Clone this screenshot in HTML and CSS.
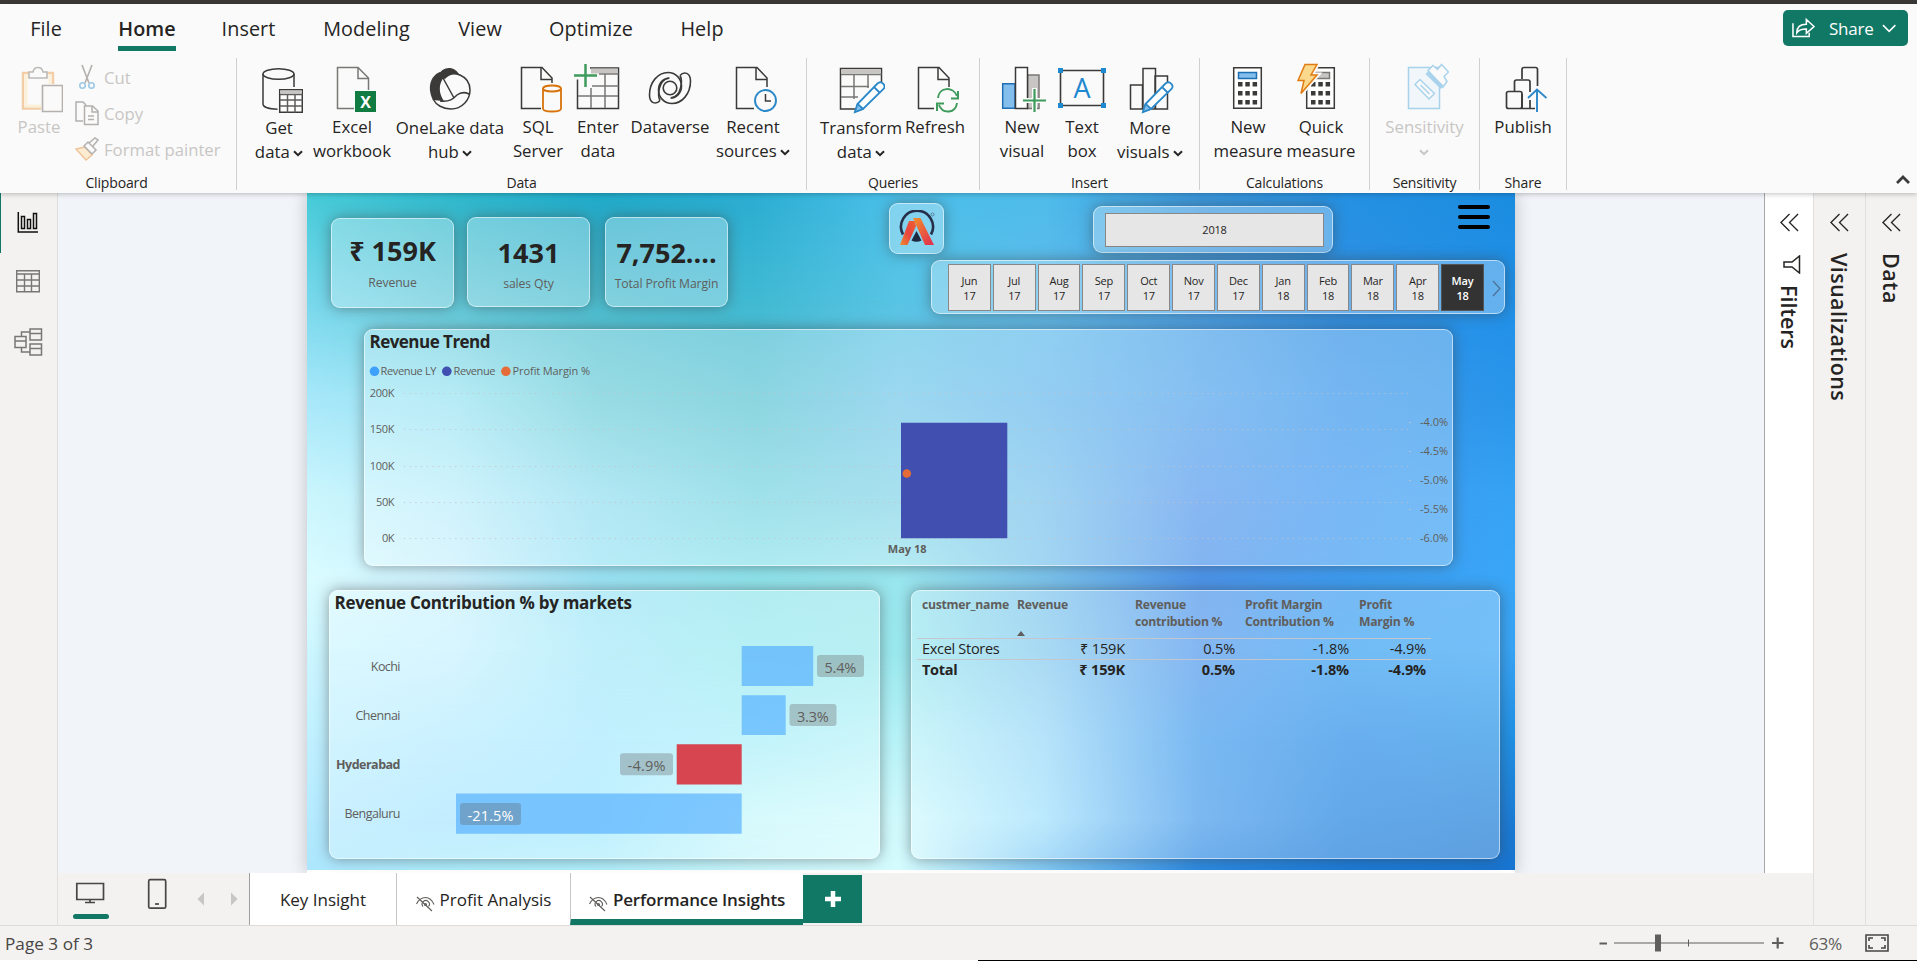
FILE: index.html
```html
<!DOCTYPE html>
<html lang="en">
<head>
<meta charset="utf-8">
<title>Power BI Desktop</title>
<link rel="stylesheet" href="styles.css">
</head>
<body>
<svg class="defs" width="0" height="0">
  <symbol id="chev" viewBox="0 0 10 7"><path d="M1 1.2l4 4 4-4" fill="none" stroke="currentColor" stroke-width="2"/></symbol>
  <symbol id="dbl" viewBox="0 0 20 20"><path d="M10 1L1 10l9 9M19 1l-9 9 9 9" fill="none" stroke="#252423" stroke-width="1.4"/></symbol>
  <symbol id="hidden" viewBox="0 0 20 17"><g fill="none" stroke="#605e5c" stroke-width="1.1"><path d="M1.500 9C4 4 7 2.500 10.500 2.500S17 5 19 9.500M2 2l15 14"/><path d="M8 11.500a3.600 3.600 0 1 1 5.500 0"/><circle cx="10.500" cy="9.500" r="1"/></g></symbol>
</svg>
<div class="app">
  <div class="titlebar"></div>
  <header class="ribbon">
    <div class="menu-row">
      <nav class="menu">
        <a>File</a><a class="on">Home</a><a>Insert</a><a>Modeling</a><a>View</a><a>Optimize</a><a>Help</a>
      </nav>
      <button class="share">
        <svg width="24" height="22" viewBox="0 0 24 22" fill="none" stroke="#fff" stroke-width="1.6"><path d="M1 6v14h17v-4M5 16c0-6 4-9 10-9V2l8 7.500-8 7V12c-5 0-8 1-10 4z"/></svg>
        <span>Share</span>
        <svg width="15" height="9" viewBox="0 0 15 9"><path d="M1 1l6.500 6.500L14 1" fill="none" stroke="#fff" stroke-width="1.600"/></svg>
      </button>
    </div>
    <div class="groups">
      <section class="group g-clip">
        <div class="clip">
          <div class="btn off"><svg class="ic" viewBox="15 62 48 52" fill="none" stroke-width="2"><path d="M41 108.500H23V73H53V84" stroke="#f2cda6" stroke-width="2.400"/><path d="M41 106H26V76H50V84" stroke="#fbf0d9" stroke-width="3"/><path d="M29 78v-6h4c1-6 9-6 10 0h4v6z" stroke="#bdbbb9" fill="#fafafa" stroke-width="1.600"/><path d="M42.500 85.500h20v26h-20z" stroke="#b3b0ad" fill="#fafafa" stroke-width="1.600"/></svg><span>Paste</span></div>
          <ul>
            <li><svg width="24" height="26" viewBox="0 0 24 26" fill="none" stroke-width="1.600"><path d="M7 1l7 18M17 1l-7 18" stroke="#b3b0ad"/><circle cx="7.500" cy="21.500" r="2.700" stroke="#9dc9e6"/><circle cx="16.500" cy="21.500" r="2.700" stroke="#9dc9e6"/></svg>Cut</li>
            <li><svg width="24" height="26" viewBox="0 0 24 26" fill="none" stroke="#b3b0ad" stroke-width="1.500"><path d="M8 21H1V2h7l3 3M9.500 6h8l5.500 5v13.500H9.500z"/><path d="M17 6v6h6M13 16h6M13 19.500h6"/></svg>Copy</li>
            <li><svg width="24" height="26" viewBox="0 0 24 26" fill="none" stroke-width="1.500"><path d="M1 13l9-2 7 8-6 5z" fill="#fcecd2" stroke="#f0c49a"/><path d="M9 10l4-4 8 8-4 4zM14 7l6-5 3 2-5 6" stroke="#b3b0ad" fill="#fafafa"/></svg>Format painter</li>
          </ul>
        </div>
        <h6>Clipboard</h6>
      </section>
      <section class="group g-data">
        <div class="btns">
          <div class="btn low"><svg class="ic" viewBox="255 62 48 52" fill="none" stroke="#3b3a39" stroke-width="1.500"><ellipse cx="278.500" cy="74" rx="15.500" ry="5.300"/><path d="M263 74v30c0 3 6 5 14.500 5.200M294 74v13"/><path d="M279.700 89.700h22.600v22.600h-22.600z" fill="#fff"/><path d="M280 90.500h22v3h-22z" fill="#c8c6c4" stroke="none"/><path d="M280 94.500h22.500M280 100h22.500M280 106h22.500M287.500 94.500v18M295 94.500v18" stroke="#605e5c"/></svg><span>Get<br>data <svg class="cv"><use href="#chev"/></svg></span></div>
          <div class="btn"><svg class="ic" viewBox="328 62 48 52" fill="none" stroke="#797775" stroke-width="1.500"><path d="M354 108.500H337.500V67.500H358L368.500 78V90"/><path d="M358 67.500V78.500H368.500"/><path d="M355 91h21v21h-21z" fill="#107c41" stroke="none"/><text x="365.500" y="107.500" class="xl">X</text></svg><span>Excel<br>workbook</span></div>
          <div class="btn low"><svg class="ic" viewBox="427 62 48 52"><path d="M439 76C443 66 456 65 461 76C458 73 450 74 446 79z" fill="#3b3a39"/><path d="M441 72C431 76 428 88 434 100L444 101C439 94 439 84 444 77z" fill="#3b3a39"/><g fill="none" stroke="#3b3a39" stroke-width="1.500"><path d="M461 75c7 3 10 8 10 15c0 10-8 19-19 19c-8 0-15-4-18-10M446 76c5-3 11-3 15-1M444 78l11 20M441 101c10 1 13-2 17-6c4-3 8-3 12-1M444 77c-5 7-5 16 0 24"/></g></svg><span>OneLake data<br>hub <svg class="cv"><use href="#chev"/></svg></span></div>
          <div class="btn"><svg class="ic" viewBox="514 62 48 52" fill="none" stroke="#3b3a39" stroke-width="1.500"><path d="M541 108.500H521.500V67.500H542L552 78V83"/><path d="M541 67.500V79.500H552"/><g stroke="#d8730b" stroke-width="1.800" fill="#fafafa"><path d="M543 88.500v20c0 4 18 4 18 0v-20"/><ellipse cx="552" cy="88.500" rx="9" ry="3"/></g></svg><span>SQL<br>Server</span></div>
          <div class="btn"><svg class="ic" viewBox="574 62 48 52" fill="none" stroke="#3b3a39" stroke-width="1.500"><path d="M577.500 79.500v29h41V68H590"/><path d="M591 68.500h27v5h-27z" fill="#c8c6c4" stroke="none"/><path d="M599 74h19.500M592 86h26.500M578 96h40M605 74v34M591 88v20" stroke="#797775"/><path d="M574 75.500h23M585.500 64v23" stroke="#3f9b5c" stroke-width="2.500"/></svg><span>Enter<br>data</span></div>
          <div class="btn"><svg class="ic" viewBox="646 62 48 52" fill="none" stroke="#3b3a39" stroke-width="1.600"><g id="dvh"><path d="M660 100.500C656 105 649.500 103.500 649.500 95C649.500 82 658 72.500 668 72.500C676 72.500 681.500 79 681.500 86C681.500 93 676.500 98 670.500 98"/><path d="M660 100.500C657.500 96 658 79.500 669 78.300"/></g><use href="#dvh" transform="rotate(180 670 88)"/><circle cx="670" cy="88" r="6.800"/></svg><span>Dataverse</span></div>
          <div class="btn"><svg class="ic" viewBox="729 62 48 52" fill="none" stroke="#3b3a39" stroke-width="1.500"><path d="M754 108.500H736.500V67.500H757L767 78V87"/><path d="M756 67.500V79.500H767"/><circle cx="765.500" cy="100.500" r="10.500" stroke="#2b88c8" stroke-width="1.900"/><path d="M765.500 94v7h5.500"/></svg><span>Recent<br>sources <svg class="cv"><use href="#chev"/></svg></span></div>
        </div>
        <h6>Data</h6>
      </section>
      <section class="group g-query">
        <div class="btns">
          <div class="btn low"><svg class="ic" viewBox="837 62 48 52" fill="none" stroke="#3b3a39" stroke-width="1.500"><path d="M858 109H840.500V68.500H881.500V82"/><path d="M841 69.500h40v4h-40z" fill="#c8c6c4" stroke="none"/><path d="M841 74.500h40.500M841 86.500h28M841 97h17M854 75v24M868 75v13" stroke="#797775"/><path id="pen" d="M855 112l2.500-8 20-20.500c4-3.500 9 2 6 5.500l-20.500 20zM857.500 104l5.500 5M874 87l6 6" stroke="#2b88c8" stroke-width="1.800" fill="#fff"/><path d="M855 112l2.500-8 5.500 5z" fill="#83beec" stroke="#2b88c8"/></svg><span>Transform<br>data <svg class="cv"><use href="#chev"/></svg></span></div>
          <div class="btn"><svg class="ic" viewBox="911 62 48 52" fill="none" stroke="#3b3a39" stroke-width="1.500"><path d="M934 108.500H918.500V67.500H939L949 78V87"/><path d="M938 67.500V79.500H949"/><path d="M938 98c1-11 15-12 19-2M957 103c-1 10-14 12-18 2M958 91v7.500H951M937 111v-7.500h7" stroke="#3f9b5c" stroke-width="2"/></svg><span>Refresh</span></div>
        </div>
        <h6>Queries</h6>
      </section>
      <section class="group g-insert">
        <div class="btns">
          <div class="btn"><svg class="ic" viewBox="998 62 48 52" fill="none" stroke="#3b3a39" stroke-width="1.500"><path d="M1002.700 83.700H1015v24.600h-12.300z" fill="#83beec" stroke="#1f6fb5"/><path d="M1027.500 75h11.500v33.500h-11.500z" fill="#c8c6c4" stroke="#797775"/><path d="M1015.500 67.500h12v41h-12z" fill="#fff"/><path d="M1022 100.500h24M1034.500 88v24" stroke="#fafafa" stroke-width="5"/><path d="M1023 100.500h23M1034.500 89v23" stroke="#3f9b5c" stroke-width="2.200"/></svg><span>New<br>visual</span></div>
          <div class="btn"><svg class="ic" viewBox="1058 62 48 52" fill="none" stroke="#3b3a39" stroke-width="1.600"><path d="M1060.500 70.500h43v35h-43z"/><path d="M1058 68h5v5h-5zM1101 68h5v5h-5zM1058 103h5v5h-5zM1101 103h5v5h-5z" fill="#1e88d0" stroke="none"/><text x="1082" y="98" class="ta">A</text></svg><span>Text<br>box</span></div>
          <div class="btn low"><svg class="ic" viewBox="1126 62 48 52" fill="none" stroke="#3b3a39" stroke-width="1.500"><path d="M1130.500 85h12v24h-12zM1155 76h12.500v33H1155zM1143 68.500h12.500v40.500H1143z" fill="#fafafa"/><use href="#pen" x="288"/><path d="M1143 112l2.500-8 5.500 5z" fill="#83beec" stroke="#2b88c8"/></svg><span>More<br>visuals <svg class="cv"><use href="#chev"/></svg></span></div>
        </div>
        <h6>Insert</h6>
      </section>
      <section class="group g-calc">
        <div class="btns">
          <div class="btn"><svg class="ic" viewBox="1224 62 48 52"><g id="calc"><path d="M1233.700 67.700h27.600v40.600h-27.600z" fill="#fff" stroke="#3b3a39" stroke-width="1.500"/><path d="M1238 82h4.500v4.500h-4.500zM1245.300 82h4.500v4.500h-4.500zM1252.600 82h4.500v4.500h-4.500zM1238 91h4.500v4.500h-4.500zM1245.300 91h4.500v4.500h-4.500zM1252.600 91h4.500v4.500h-4.500zM1238 100h4.500v4.500h-4.500zM1245.300 100h4.500v4.500h-4.500zM1252.600 100h4.500v4.500h-4.500z" fill="#3b3a39"/></g><path d="M1238.500 72.500h18v6h-18z" fill="#83beec" stroke="#1f6fb5" stroke-width="1.500"/></svg><span>New<br>measure</span></div>
          <div class="btn"><svg class="ic" viewBox="1297 62 48 52"><use href="#calc" x="73"/><path d="M1311.500 72.500h18v6h-18z" fill="#c8c6c4" stroke="#797775" stroke-width="1.500"/><path d="M1305 64.500h12l-6 10.500h6l-16 18.500 3-13h-6z" fill="#fbd98c" stroke="#fafafa" stroke-width="5"/><path d="M1305 64.500h12l-6 10.500h6l-16 18.500 3-13h-6z" fill="#fbd98c" stroke="#e07b12" stroke-width="1.500"/></svg><span>Quick<br>measure</span></div>
        </div>
        <h6>Calculations</h6>
      </section>
      <section class="group g-sens">
        <div class="btns">
          <div class="btn off"><svg class="ic" viewBox="1400 62 48 52" fill="none" stroke="#a9d3ec" stroke-width="1.500"><path d="M1407.500 67.500h31v41h-31z" fill="#f0f6fa"/><path d="M1419 79.500l14.500 14-5.500 5.500-14-14.500zM1419.500 85l9 9" fill="#fafafa"/><path d="M1427 70.500l5-5 4.500 4 4-5 7 7.500-4.500 4.500 3 5-4 5.500z" fill="#fafafa"/><path d="M1426 72.500l15.500 15" stroke-width="4.500"/></svg><span>Sensitivity<br><svg class="cv"><use href="#chev"/></svg></span></div>
        </div>
        <h6>Sensitivity</h6>
      </section>
      <section class="group g-share">
        <div class="btns">
          <div class="btn"><svg class="ic" viewBox="1499 62 48 52" fill="none" stroke="#3b3a39" stroke-width="1.700"><path d="M1522 79v-9.500q0-2 2-2h11.500q2 0 2 2V86M1514.500 91v-9q0-2 2-2H1528q2 0 2 2v10M1530 100v8M1522 94v14.500h13"/><rect x="1506.500" y="91.500" width="15.500" height="17" rx="2"/><path d="M1537 112V90M1528 98l9-8.500 9.500 8.500" stroke="#2b88c8" stroke-width="1.900"/></svg><span>Publish</span></div>
        </div>
        <h6>Share</h6>
      </section>
      <svg class="collapse" width="14" height="9" viewBox="0 0 14 9"><path d="M1 8l6-6 6 6" fill="none" stroke="#3b3a39" stroke-width="2.800"/></svg>
    </div>
  </header>

  <main class="body">
    <aside class="rail">
      <div class="rail-item sel"><svg width="28" height="28" viewBox="14 208 28 28" fill="none" stroke="#111" stroke-width="1.500"><path d="M18.300 212v20H38M21.500 216.500h3v12h-3zM27.500 219.500h3v9h-3zM33.500 213.500h3v15h-3z"/></svg></div>
      <div class="rail-item"><svg width="28" height="28" viewBox="14 268 28 28" fill="none" stroke="#797775" stroke-width="1.400"><path d="M16.700 270.700h22.600v21h-22.600zM17 274h22M17 280h22M17 286h22M24.500 274v18M31.500 274v18"/></svg></div>
      <div class="rail-item"><svg width="30" height="30" viewBox="13 327 30 30" fill="none" stroke="#797775" stroke-width="1.500"><path d="M15 336.500h11v11H15zM15 341h11M30 329h11.500v11H30zM30 333.500h11.500M30 344h11.500v11H30zM30 348.500h11.500M21.500 336v-4H30M21.500 348v4H30"/></svg></div>
    </aside>
    <div class="center">
      <div class="upper">
        <div class="stage">
          <div class="page">
            <div class="wall"><i class="w1"></i><i class="w2"></i><i class="w3"></i><i class="w4"></i><i class="w5"></i><i class="w6"></i><i class="w7"></i><i class="w8"></i><i class="w9"></i></div>
            <div class="tile kpi k1"><b>₹ 159K</b><span>Revenue</span></div>
            <div class="tile kpi k2"><b>1431</b><span>sales Qty</span></div>
            <div class="tile kpi k3"><b>7,752....</b><span>Total Profit Margin</span></div>
            <div class="tile logo"><svg width="36" height="38" viewBox="898 211 36 38"><defs><linearGradient id="lg" x1="0" y1="1" x2="1" y2="0"><stop offset="0" stop-color="#f08c2e"/><stop offset=".5" stop-color="#e8443f"/><stop offset="1" stop-color="#f0602e"/></linearGradient><linearGradient id="lg2" x1="0" y1="0" x2=".8" y2="1"><stop offset="0" stop-color="#f3902c"/><stop offset="1" stop-color="#e2344c"/></linearGradient></defs><path d="M902 235.500a16 16 0 1 1 28 0" fill="none" stroke="#26304a" stroke-width="2.600"/><path d="M899 246l9-24h5.500l1.500 5-8.500 19z" fill="url(#lg)"/><path d="M912 219h7.500l13.500 27h-9z" fill="url(#lg2)"/><path d="M915.500 232l5 9.500q-5 2.500-10 0z" fill="#1f2940"/><circle cx="931.500" cy="215.500" r="1.500" fill="none" stroke="#4c6f86" stroke-width=".8"/></svg></div>
            <div class="tile year"><div class="opt">2018</div></div>
            <div class="tile months">
              <div class="opt">Jun<br>17</div><div class="opt">Jul<br>17</div><div class="opt">Aug<br>17</div><div class="opt">Sep<br>17</div><div class="opt">Oct<br>17</div><div class="opt">Nov<br>17</div><div class="opt">Dec<br>17</div><div class="opt">Jan<br>18</div><div class="opt">Feb<br>18</div><div class="opt">Mar<br>18</div><div class="opt">Apr<br>18</div><div class="opt cur">May<br>18</div>
              <svg width="9" height="17" viewBox="0 0 9 17"><path d="M1 1l7 7.500-7 7.500" fill="none" stroke="#4d6f92" stroke-width="1.200"/></svg>
            </div>
            <div class="burger"><i></i><i></i><i></i></div>

            <div class="tile trend">
              <svg width="1088" height="237" viewBox="364 329 1088 237">
                <g class="ttl"><text x="369.500" y="348" textLength="121">Revenue Trend</text></g>
                <circle cx="374.500" cy="371.300" r="4.800" fill="#3ea1fb"/><circle cx="446.800" cy="371.300" r="4.800" fill="#414fb1"/><circle cx="505.900" cy="371.300" r="4.800" fill="#e66c37"/>
                <g class="lab"><text x="380.500" y="375" textLength="56">Revenue LY</text><text x="453.500" y="375" textLength="42">Revenue</text><text x="512.500" y="375" textLength="77.500">Profit Margin %</text>
                <text x="369.800" y="397" textLength="24.700">200K</text><text x="369.800" y="433" textLength="24.700">150K</text><text x="369.800" y="470" textLength="24.700">100K</text><text x="376" y="506" textLength="18.500">50K</text><text x="382" y="542" textLength="12.500">0K</text>
                <text x="1420" y="426" textLength="28">-4.0%</text><text x="1420" y="455" textLength="28">-4.5%</text><text x="1420" y="484" textLength="28">-5.0%</text><text x="1420" y="513" textLength="28">-5.5%</text><text x="1420" y="542" textLength="28">-6.0%</text></g>
                <path d="M404 393.500H1409M404 429.500H1409M404 466.500H1409M404 502.500H1409M404 538.500H1409" stroke="#c8c0c4" stroke-width="1" stroke-dasharray="1 4.700"/>
                <path d="M1409 422.500h1.500M1409 451.500h1.500M1409 480.500h1.500M1409 509.500h1.500M1409 538.500h1.500" stroke="#c8c6c4"/>
                <path d="M901 422.700h106.300v115.600H901z" fill="#414fb1"/>
                <circle cx="906.800" cy="473.500" r="4.300" fill="#e66c37"/>
                <g class="lab bold"><text x="887.800" y="553" textLength="38.700">May 18</text></g>
              </svg>
            </div>

            <div class="tile market">
              <svg width="551" height="269" viewBox="329 590 551 269">
                <g class="ttl"><text x="334.500" y="609" textLength="297.500">Revenue Contribution % by markets</text></g>
                <g class="cat"><text x="370.800" y="671" textLength="29.700">Kochi</text><text x="355.500" y="720" textLength="45">Chennai</text><text class="bold" x="336" y="769" textLength="64.500">Hyderabad</text><text x="344.500" y="818" textLength="56">Bengaluru</text></g>
                <g fill="#4aaaff" fill-opacity=".62"><path d="M741.700 646h71.500v40h-71.500zM741.700 695.300h44v39.700h-44zM456 793.600h285.700v40.200H456z"/></g>
                <path d="M676.700 744.300h65v40.200h-65z" fill="#d64550"/>
                <g class="pill"><rect x="817" y="655" width="47" height="22" rx="3"/><rect x="789.500" y="704" width="47" height="22" rx="3"/><rect x="620" y="753.300" width="53" height="22" rx="3"/><rect x="460" y="803" width="61" height="22" rx="3"/></g>
                <g class="val"><text x="824.500" y="672.500" textLength="31.700">5.4%</text><text x="797" y="721.500" textLength="31.700">3.3%</text><text x="627.500" y="770.500" textLength="38">-4.9%</text><text x="467.500" y="820.500" textLength="46" class="inv">-21.5%</text></g>
              </svg>
            </div>

            <div class="tile grid">
              <table>
                <colgroup><col class="c1"><col class="c2"><col class="c3"><col class="c4"><col class="c5"></colgroup>
                <thead><tr><th>custmer_name</th><th>Revenue<i class="sort"></i></th><th>Revenue<br>contribution %</th><th>Profit Margin<br>Contribution %</th><th>Profit<br>Margin %</th></tr></thead>
                <tbody><tr><td>Excel Stores</td><td>₹ 159K</td><td>0.5%</td><td>-1.8%</td><td>-4.9%</td></tr></tbody>
                <tfoot><tr><td>Total</td><td>₹ 159K</td><td>0.5%</td><td>-1.8%</td><td>-4.9%</td></tr></tfoot>
              </table>
            </div>
          </div>
        </div>
        <aside class="pane filters"><svg class="dbl"><use href="#dbl"/></svg><svg class="fun" width="18" height="19" viewBox="0 0 18 19"><path d="M16.500 1v17L9 12H1V7h8z" fill="none" stroke="#252423" stroke-width="1.500"/></svg><span>Filters</span></aside>
      </div>
      <div class="tabs">
        <div class="views">
          <svg width="30" height="22" viewBox="75 882 30 22" fill="none" stroke="#484644" stroke-width="1.700"><path d="M76.800 883.500h26.700v16H76.800zM90 899.500v3M85 902.500h10"/></svg>
          <i></i>
        </div>
        <svg class="phone" width="20" height="32" viewBox="147 878 20 32" fill="none" stroke="#484644" stroke-width="1.700"><rect x="148.700" y="879.700" width="17" height="28.500" rx="1.500"/><path d="M155 904h4"/></svg>
        <svg class="arrows" width="42" height="14" viewBox="198 892 42 14"><path d="M205 892.500v13l-6.500-6.500zM232 892.500v13l6.500-6.500z" fill="#c8c6c4"/></svg>
        <div class="tab t1">Key Insight</div>
        <div class="tab t2"><svg class="eye"><use href="#hidden"/></svg><span>Profit Analysis</span></div>
        <div class="tab t3"><svg class="eye"><use href="#hidden"/></svg><span>Performance Insights</span></div>
        <div class="add"><svg width="16" height="16" viewBox="0 0 16 16"><path d="M8 0v16M0 8h16" stroke="#fff" stroke-width="4.500"/></svg></div>
      </div>
    </div>
    <aside class="pane vis"><svg class="dbl"><use href="#dbl"/></svg><span>Visualizations</span></aside>
    <aside class="pane dat"><svg class="dbl"><use href="#dbl"/></svg><span>Data</span></aside>
  </main>
  <footer class="status">
    <span>Page 3 of 3</span>
    <div class="zoom">
      <svg width="186" height="20" viewBox="1596 933.500 186 20" stroke="#605e5c" fill="none"><path d="M1597.500 944h7.500M1770 943.500h11.500M1775.700 938v11" stroke-width="2.200"/><path d="M1612 943.500h150M1686.500 940v7"/><path d="M1656 935v17" stroke-width="6"/></svg>
      <span>63%</span>
      <svg width="24" height="18" viewBox="0 0 24 18" stroke="#484644" fill="none" stroke-width="1.600"><path d="M1 1h22v16H1z"/><path d="M4 7V4h4M16 4h4v3M20 11v3h-4M8 14H4v-3"/></svg>
    </div>
  </footer>
  <div class="edge"></div>
</div>
</body>
</html>
```
FILE: styles.css
```css
* { box-sizing: border-box; }
body { margin: 0; font-family: "Open Sans", "Noto Sans", sans-serif; color: #252423; background: #f3f2f1; }
.defs { position: absolute; }
.app { width: 1917px; height: 961px; overflow: hidden; display: flex; flex-direction: column; }
.titlebar { height: 4px; background: #3b3a39; }

/* ribbon */
.ribbon { height: 189px; background: #fafafa; position: relative; z-index: 2; box-shadow: 0 1px 5px rgba(0,0,0,.25); }
.menu-row { height: 54px; display: flex; justify-content: space-between; padding-right: 9px; }
.menu { display: grid; grid-template-columns: 92px 110px 93px 143px 84px 138px 84px; height: 47px; }
.menu a { justify-self: center; font-size: 19.8px; line-height: 50px; height: 47px; letter-spacing: .1px; }
.menu .on { font-weight: 600; border-bottom: 5px solid #117865; letter-spacing: .1px; }
.share { margin-top: 6px; width: 125px; height: 36px; border: 0; border-radius: 5px; background: #117865; color: #fff; font: 17px "Open Sans", sans-serif; display: flex; align-items: center; padding: 0 12px 0 9px; letter-spacing: -.2px; }
.share span { margin: 0 8px 0 14px; }
.groups { height: 135px; display: flex; position: relative; }
.group { height: 132px; border-right: 1px solid #d2d0ce; display: flex; flex-direction: column; justify-content: space-between; }
.group h6 { margin: 0; font-weight: 400; font-size: 14px; line-height: 23px; text-align: center; height: 19px; letter-spacing: -.15px; }
.g-clip { width: 237px; } .g-data { width: 570px; } .g-query { width: 173px; } .g-insert { width: 220px; } .g-calc { width: 170px; } .g-sens { width: 110px; } .g-share { width: 87px; }
.g-clip h6 { padding-right: 3px; }
.btns { display: grid; }
.g-data .btns { padding-left: 5px; grid-template-columns: 74px 72px 124px 52px 68px 76px 90px; }
.g-query .btns { padding-left: 9px; grid-template-columns: 90px 58px; }
.g-insert .btns { padding-left: 12px; grid-template-columns: 60px 60px 76px; }
.g-calc .btns { padding-left: 11px; grid-template-columns: 74px 72px; }
.g-sens .btns { grid-template-columns: 109px; }
.g-share .btns { grid-template-columns: 86px; }
.btn { display: flex; flex-direction: column; align-items: center; padding-top: 4px; font-size: 16.800px; line-height: 24px; text-align: center; }
.btn > span { white-space: nowrap; padding-top: 1px; }
.ic { width: 48px; height: 52px; flex: none; }
.btn.low > span { padding-top: 2px; }
.off { color: #c8c6c4; }
.cv { width: 10px; height: 7px; vertical-align: 1px; margin-left: -1px; }
.xl { font: bold 16px "Open Sans", sans-serif; fill: #fff; stroke: none; text-anchor: middle; }
.ta { font: 27px "Open Sans", sans-serif; fill: #1e88d0; stroke: none; text-anchor: middle; }
.clip { display: flex; }
.clip .btn { width: 60px; margin-left: 9px; }
.clip ul { list-style: none; margin: 1px 0 0 6px; padding: 0; color: #c8c6c4; font-size: 16.700px; }
.clip li { height: 36px; display: flex; align-items: center; gap: 5px; white-space: nowrap; }
.collapse { position: absolute; right: 7px; bottom: 9px; }

/* workspace */
.body { height: 732px; display: flex; }
.rail { width: 58px; border-right: 1px solid #e1dfdd; background: #f3f2f1; display: flex; flex-direction: column; }
.rail-item { height: 60px; display: flex; align-items: center; padding-left: 14px; }
.rail-item.sel { border-left: 1px solid #117865; padding-left: 13px; padding-bottom: 3px; }
.rail-item:nth-child(2) { padding-bottom: 2px; }
.rail-item:nth-child(3) { padding: 0 0 2px 13px; }
.center { width: 1755px; display: flex; flex-direction: column; }
.upper { height: 680px; display: flex; }
.stage { width: 1706px; background: #f1f5fa; padding-left: 249px; overflow: hidden; }
.page { width: 1208px; height: 680px; border-bottom: 3px solid #fff; position: relative; box-shadow: 0 0 16px rgba(0,0,0,.22); }

/* wallpaper: bands of colour, each fading into the next one below */
.wall, .wall i { position: absolute; inset: 0; }
.w1 { background: linear-gradient(90deg,#46cbd8,#2fb8cc 12%,#1fa9c8 24%,#2badd2 37%,#4bc0ea 49%,#4ebcea 61%,#3a98de 74%,#2591e2 86%,#1b8de0); }
.w2 { background: linear-gradient(90deg,#78d8ec,#62c8d8 12%,#4cbdd0 24%,#40b9d2 37%,#58c4e4 49%,#60bcec 61%,#4aa2e8 74%,#3090e4 86%,#2090e8); mask: linear-gradient(transparent 0,#000 107px); }
.w3 { background: linear-gradient(90deg,#a8e8fa,#99e4f2 12%,#6ccdd8 24%,#5bc4d3 37%,#72c7ea 49%,#66b8ec 61%,#52a4ec 74%,#3997ec 86%,#2a96ea); mask: linear-gradient(transparent 107px,#000 207px); }
.w4 { background: linear-gradient(90deg,#ccf6fd,#bceefb 12%,#92def0 24%,#77d5e1 37%,#83d3e7 49%,#78c2ec 61%,#5599ec 74%,#3e9af2 86%,#37a3f4); mask: linear-gradient(transparent 207px,#000 307px); }
.w5 { background: linear-gradient(90deg,#dafcff,#ccf0fd 12%,#9ce4f6 24%,#90e4ec 37%,#9ae6ee 49%,#7cc4ec 61%,#4c94ea 74%,#3e9cf0 86%,#3aa6f6); mask: linear-gradient(transparent 307px,#000 387px); }
.w6 { background: linear-gradient(90deg,#ccf6ff,#c7f2ff 12%,#a4e9f8 24%,#97eaf0 37%,#9ae9ee 49%,#84caee 61%,#5098ec 74%,#36a0f2 86%,#38a4f6); mask: linear-gradient(transparent 387px,#000 457px); }
.w7 { background: linear-gradient(90deg,#c0f0ff,#b4ebff 12%,#a8e9ff 24%,#a9eff9 37%,#b8f3f8 49%,#99d8f8 61%,#409bec 74%,#298ce7 86%,#2090e4); mask: linear-gradient(transparent 457px,#000 547px); }
.w8 { background: linear-gradient(90deg,#b4eaff,#a8e6ff 12%,#a4eaff 24%,#c7f8fb 37%,#d0fafd 49%,#9fe0fc 61%,#4499ea 74%,#2083e0 86%,#1c7cd6); mask: linear-gradient(transparent 547px,#000 627px); }
.w9 { background: linear-gradient(90deg,#ace6fe,#acecfc 12%,#b0eefc 24%,#c8f6fc 37%,#d4fbfe 49%,#80c8f4 61%,#2a88e0 74%,#1c7ad6 86%,#1874d0); mask: linear-gradient(transparent 627px,#000 677px); }

.tile { position: absolute; background: rgba(255,255,255,.3); border: 1px solid rgba(255,255,255,.55); border-radius: 9px; box-shadow: 0 0 14px rgba(60,60,60,.5); }
.tile > svg { display: block; }
.kpi { display: flex; flex-direction: column; align-items: center; width: 123px; height: 90px; }
.kpi b { font-size: 27px; line-height: 34px; white-space: nowrap; margin-top: 15px; }
.kpi span { font-size: 12.200px; line-height: 17px; color: #605e5c; margin-top: 6px; white-space: nowrap; letter-spacing: -.1px; }
.k1 { left: 24px; top: 25px; }
.k2 { left: 160px; top: 24px; }
.k2 b, .k3 b { margin-top: 18px; }
.k2 span, .k3 span { margin-top: 5px; }
.k3 { left: 298px; top: 24px; }
.logo { left: 582px; top: 10px; width: 55px; height: 51px; padding: 6px 0 0 9px; }
.year { left: 786px; top: 13px; width: 240px; height: 47px; padding: 6px 8px 5px 11px; }
.opt { background: #e6e6e6; border: 1px solid #8a8886; color: #252423; font-size: 11px; text-align: center; letter-spacing: -.2px; }
.year .opt { height: 34px; line-height: 32px; }
.months { left: 624px; top: 67px; width: 574px; height: 54px; padding: 3px 3px 0 16px; display: flex; gap: 2px; }
.months .opt { width: 42.900px; height: 47px; line-height: 15px; padding-top: 8px; }
.months .cur { background: #333; color: #fff; border-color: #555; font-weight: 600; }
.months svg { margin: 16px 0 0 6px; flex: none; }
.burger { position: absolute; left: 1151px; top: 12px; width: 32px; height: 24px; display: flex; flex-direction: column; justify-content: space-between; }
.burger i { height: 4px; border-radius: 2px; background: #000; }
.trend { left: 57px; top: 136px; width: 1089px; height: 237px; }
.market { left: 22px; top: 397px; width: 551px; height: 269px; }
.grid { left: 604px; top: 397px; width: 589px; height: 269px; padding: 5px 0 0 5px; }
.trend > svg, .market > svg { margin: -1px; }
.ttl text { font-size: 17px; font-weight: 700; fill: #252423; }
.lab text { font-size: 11px; fill: #605e5c; }
.bold text, text.bold { font-weight: 700; }
.cat text { font-size: 12.500px; fill: #605e5c; }
.val text { font-size: 14.500px; fill: #605e5c; }
.val .inv { fill: #fff; }
.pill { fill: rgba(96,94,92,.32); }

table { border-collapse: collapse; table-layout: fixed; width: 514px; font-size: 14.500px; letter-spacing: -.15px; }
.c1 { width: 95px; } .c2 { width: 118px; } .c3 { width: 110px; } .c4 { width: 114px; } .c5 { width: 77px; }
th { text-align: left; vertical-align: top; font-size: 12.200px; font-weight: 700; color: #605e5c; line-height: 17px; height: 42px; padding: 0 0 0 5px; white-space: nowrap; letter-spacing: -.25px; }
td { text-align: right; padding: 0 5px; line-height: 20px; height: 21px; white-space: nowrap; }
td:first-child { text-align: left; letter-spacing: -.3px; }
thead tr, tbody tr { border-bottom: 1px solid #c3c6cc; }
tfoot td { font-weight: 700; }
.sort { display: block; width: 0; border: 4.500px solid transparent; border-top: 0; border-bottom: 5px solid #605e5c; margin-top: 18px; margin-bottom: -6px; }

/* side panes */
.pane { display: flex; flex-direction: column; align-items: center; padding-top: 20px; }
.pane span { writing-mode: vertical-rl; font-size: 21.500px; font-weight: 600; line-height: 30px; letter-spacing: .4px; }
.dbl { width: 19px; height: 19px; flex: none; }
.filters { width: 49px; background: #fff; border-left: 1px solid #a9a8a7; }
.filters .fun { margin: 23px 0 0 6px; }
.filters span { margin-top: 11px; letter-spacing: 0; }
.vis { width: 52px; border-left: 1px solid #e1dfdd; }
.dat { width: 52px; border-left: 1px solid #e1dfdd; }
.vis span, .dat span { margin: 21px 2px 0 0; }

/* page tabs */
.tabs { height: 52px; display: flex; background: #f3f2f1; padding-left: 15px; }
.views { width: 36px; padding-top: 9px; display: flex; flex-direction: column; align-items: center; }
.views svg { margin-left: -2px; }
.views i { width: 36px; height: 5px; border-radius: 3px; background: #117865; margin-top: 10px; }
.phone { margin: 5px 0 0 38px; }
.arrows { margin: 19px 10px 0 30px; }
.tab { background: #fff; border-left: 1px solid #c8c6c4; font-size: 17px; line-height: 54px; white-space: nowrap; display: flex; justify-content: center; }
.t1 { width: 147px; border-color: #a19f9d; }
.t2 { width: 174px; }
.t3 { width: 233px; font-weight: 600; border-bottom: 6px solid #117865; letter-spacing: -.15px; }
.eye { width: 20px; height: 17px; margin: 22px 5px 0 -1px; }
.add { width: 59px; height: 48px; margin-top: 2px; background: #117865; display: flex; align-items: center; justify-content: center; }

.status { height: 35px; border-top: 1px solid #dedcda; display: flex; justify-content: space-between; align-items: center; padding: 0 28px 0 5px; font-size: 17.200px; color: #484644; }
.zoom { display: flex; align-items: center; }
.zoom span { margin: 0 23px 0 25px; color: #605e5c; letter-spacing: -.3px; }
.edge { height: 1px; background: linear-gradient(90deg,#fff 978px,#000 978px); }
```
